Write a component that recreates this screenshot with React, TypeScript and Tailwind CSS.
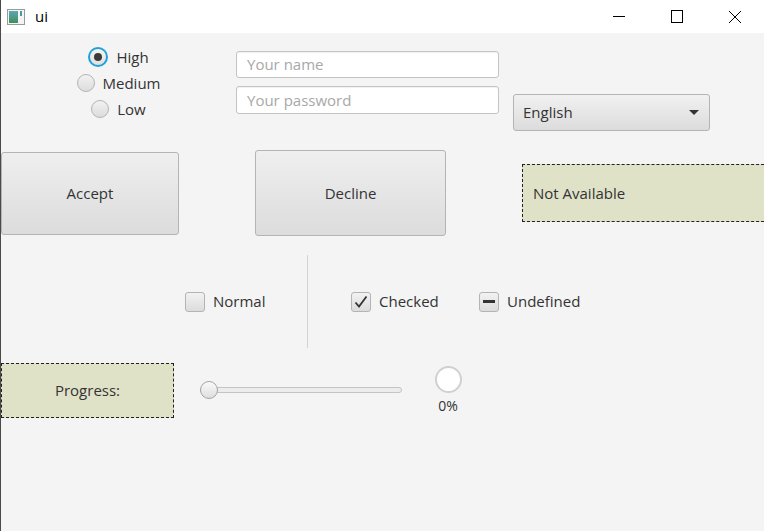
import React from "react";

const font = "font-['Open_Sans','Liberation_Sans',sans-serif]";

function WinIcon() {
  return (
    <svg width="18" height="16" viewBox="0 0 18 16">
      <defs>
        <linearGradient id="wg" x1="0" y1="0" x2="0" y2="1">
          <stop offset="0" stopColor="#5aa7b8" />
          <stop offset="1" stopColor="#3f8f5e" />
        </linearGradient>
      </defs>
      <rect x="0.5" y="0.5" width="17" height="15" fill="#f4f4f4" stroke="#9a9a9a" />
      <rect x="2" y="2" width="9" height="12" fill="url(#wg)" />
      <rect x="13" y="2" width="2" height="5" fill="#4a9aa0" />
    </svg>
  );
}

function TitleBar() {
  return (
    <div className="flex h-[33px] shrink-0 items-center bg-white">
      <div className="ml-[6px] mt-[1px]">
        <WinIcon />
      </div>
      <span className="ml-[10px] text-[15px] leading-none text-black">ui</span>
      <div className="ml-auto flex h-full items-center">
        <div className="flex h-full w-[58px] items-center justify-center">
          <div className="h-px w-[12px] bg-black" />
        </div>
        <div className="flex h-full w-[58px] items-center justify-center">
          <div className="h-[13px] w-[12px] border border-black" />
        </div>
        <div className="flex h-full w-[58px] items-center justify-center">
          <svg width="14" height="14" viewBox="0 0 14 14">
            <path d="M1 1 L13 13 M13 1 L1 13" stroke="#000" strokeWidth="1" />
          </svg>
        </div>
      </div>
    </div>
  );
}

function Radio({ label, checked }: { label: string; checked?: boolean }) {
  return (
    <div className="flex h-[20px] items-center gap-[8px]">
      {checked ? (
        <div className="flex h-[20px] w-[20px] items-center justify-center rounded-full bg-[#1ea1d6] p-[2px]">
          <div className="flex h-full w-full items-center justify-center rounded-full bg-linear-to-b from-[#f4f4f4] to-[#e0e0e0]">
            <div className="h-[8px] w-[8px] rounded-full bg-[#3a3a3a]" />
          </div>
        </div>
      ) : (
        <div className="h-[18px] w-[18px] rounded-full border border-[#b4b4b4] bg-linear-to-b from-[#f2f2f2] to-[#dcdcdc]" />
      )}
      <span className="text-[15px] text-[#333]">{label}</span>
    </div>
  );
}

function Field({ placeholder, h }: { placeholder: string; h: string }) {
  return (
    <div
      className={`flex ${h} w-[263px] items-center rounded-[3px] border border-[#c4c4c4] bg-white px-[10px] shadow-[inset_0_1px_1px_rgba(0,0,0,0.06)]`}
    >
      <span className="text-[15px] text-[#a8a8a8]">{placeholder}</span>
    </div>
  );
}

function Check({ label, state }: { label: string; state: "off" | "on" | "mixed" }) {
  return (
    <div className="flex items-center gap-[8px]">
      <div className="flex h-[20px] w-[20px] items-center justify-center rounded-[3px] border border-[#b4b4b4] bg-linear-to-b from-[#f2f2f2] to-[#dcdcdc]">
        {state === "on" && (
          <svg width="14" height="14" viewBox="0 0 14 14">
            <path d="M1.5 7.5 L5 11.5 L12.5 1.5" fill="none" stroke="#333" strokeWidth="1.8" />
          </svg>
        )}
        {state === "mixed" && <div className="h-[3px] w-[12px] bg-[#333]" />}
      </div>
      <span className="text-[15px] text-[#333]">{label}</span>
    </div>
  );
}

const btn =
  "flex shrink-0 items-center justify-center rounded-[3px] border border-[#b4b4b4] bg-linear-to-b from-[#efefef] to-[#dcdcdc] text-[15px] text-[#333]";

export default function App() {
  return (
    <div className={`flex h-[531px] w-[764px] flex-col overflow-hidden border-l border-[#4a4a4a] ${font}`}>
      <TitleBar />
      <div className="flex-1 overflow-hidden bg-[#f4f4f4]">
        {/* row 1 */}
        <div className="flex h-[98px] items-start">
          <div className="mt-[14px] flex w-[235px] shrink-0 flex-col items-center gap-[6px]">
            <Radio label="High" checked />
            <Radio label="Medium" />
            <Radio label="Low" />
          </div>
          <div className="mt-[18px] flex shrink-0 flex-col gap-[8px]">
            <Field placeholder="Your name" h="h-[27px]" />
            <Field placeholder="Your password" h="h-[28px]" />
          </div>
          <div className="ml-[14px] mt-[61px] flex h-[37px] w-[197px] shrink-0 items-center justify-between rounded-[3px] border border-[#b4b4b4] bg-linear-to-b from-[#f1f1f1] to-[#dcdcdc] pl-[9px] pr-[10px]">
            <span className="text-[15px] text-[#333]">English</span>
            <svg width="10" height="5" viewBox="0 0 10 5">
              <path d="M0 0 L10 0 L5 5 Z" fill="#333" />
            </svg>
          </div>
        </div>

        {/* row 2 */}
        <div className="mt-[19px] flex h-[86px] items-center">
          <div className={`${btn} h-[83px] w-[178px]`}>Accept</div>
          <div className={`${btn} ml-[76px] h-[86px] w-[191px]`}>Decline</div>
          <div className="ml-[76px] flex h-[58px] w-[262px] shrink-0 items-center border border-dashed border-[#222] bg-[#e0e2c8] pl-[10px] text-[15px] text-[#333]">
            Not Available
          </div>
        </div>

        {/* row 3 */}
        <div className="mt-[19px] flex h-[93px] items-center">
          <div className="ml-[184px] w-[122px] shrink-0">
            <Check label="Normal" state="off" />
          </div>
          <div className="h-full w-px shrink-0 bg-[#d2d2d2]" />
          <div className="ml-[43px] w-[128px] shrink-0">
            <Check label="Checked" state="on" />
          </div>
          <Check label="Undefined" state="mixed" />
        </div>

        {/* row 4 */}
        <div className="mt-[15px] flex items-start">
          <div className="flex h-[55px] w-[173px] shrink-0 items-center justify-center border border-dashed border-[#222] bg-[#e0e2c8] text-[15px] text-[#333]">
            Progress:
          </div>
          <div className="relative ml-[26px] mt-[18px] flex h-[18px] w-[202px] shrink-0 items-center">
            <div className="h-[6px] w-full rounded-full border border-[#c4c4c4] bg-[#ececec]" />
            <div className="absolute left-0 top-0 h-[18px] w-[18px] rounded-full border border-[#a4a4a4] bg-linear-to-b from-[#fafafa] to-[#dedede]" />
          </div>
          <div className="ml-[26px] mt-[3px] flex w-[40px] shrink-0 flex-col items-center">
            <div className="h-[27px] w-[27px] rounded-full border-2 border-[#d0d0d0] bg-white" />
            <span className="mt-[3px] text-[14px] leading-[20px] text-[#333]">0%</span>
          </div>
        </div>
      </div>
    </div>
  );
}
